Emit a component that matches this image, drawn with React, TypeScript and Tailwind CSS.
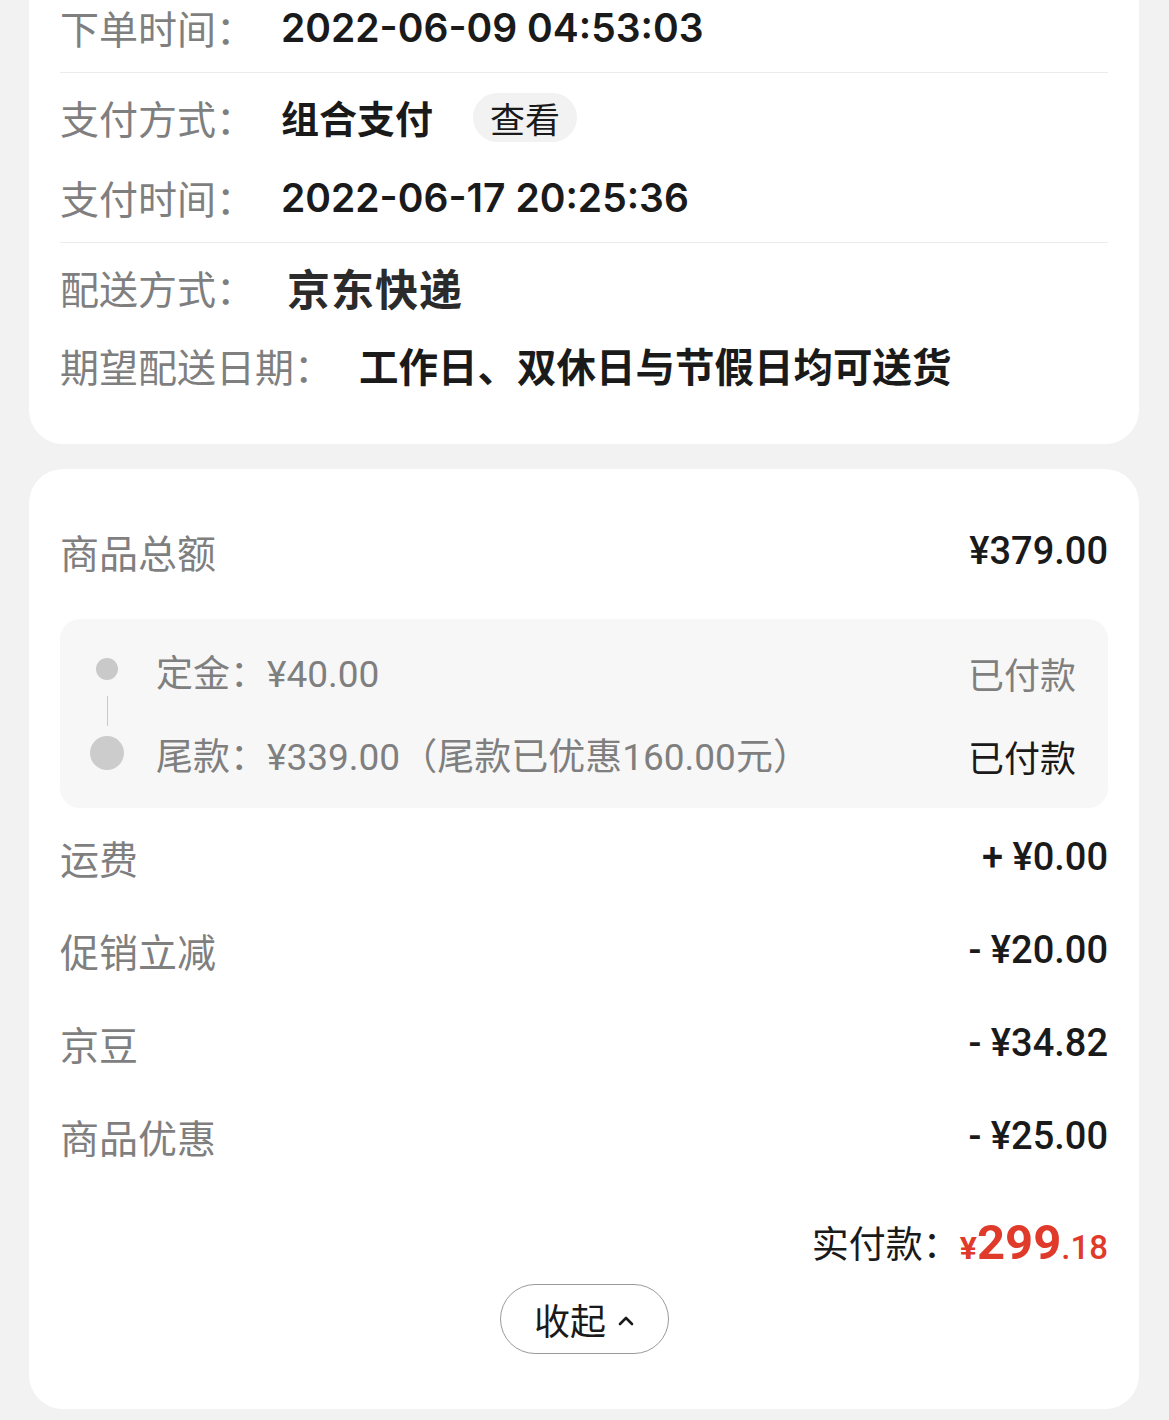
import React from "react";

const CJK = "font-['Noto_Sans_CJK_SC',sans-serif]";
const NUM_TOP = "font-['Inter','Noto_Sans_CJK_SC',sans-serif]";
const NUM = "font-['Roboto','Noto_Sans_CJK_SC',sans-serif]";

const InfoRow = ({
  label,
  labelWidth = "w-[221px]",
  children,
}: {
  label: string;
  labelWidth?: string;
  children: React.ReactNode;
}) => (
  <div className="flex h-[54px] items-center">
    <span className={`${labelWidth} shrink-0 text-[39px] leading-none text-[#7f7f7f] ${CJK}`}>{label}</span>
    {children}
  </div>
);

const FeeRow = ({ label, value }: { label: string; value: string }) => (
  <div className="flex h-[54px] items-center justify-between">
    <span className={`text-[39px] leading-none text-[#7f7f7f] ${CJK}`}>{label}</span>
    <span className={`text-[38px] leading-none font-medium text-[#1a1a1a] ${NUM}`}>{value}</span>
  </div>
);

const App: React.FC = () => {
  return (
    <div className="min-h-[1420px] w-[1169px] bg-[#f2f2f2] pl-[29px] pr-[30px]">
      {/* Order info card (top edge is scrolled off) */}
      <div className="rounded-b-[34px] bg-white px-[31px] pb-[52px]">
        <InfoRow label="下单时间：">
          <span className={`text-[39px] leading-none font-semibold text-[#1a1a1a] ${NUM_TOP}`}>2022-06-09 04:53:03</span>
        </InfoRow>
        <div className="mt-[18px] mb-[17px] h-px bg-[#ececec]" />
        <InfoRow label="支付方式：">
          <span className={`text-[38px] leading-none font-bold text-[#1a1a1a] ${CJK}`}>组合支付</span>
          <span className={`ml-[40px] flex h-[49px] w-[104px] items-center justify-center rounded-full bg-[#f2f2f2] text-[35px] leading-none text-[#1a1a1a] ${CJK}`}>
            查看
          </span>
        </InfoRow>
        <div className="mt-[26px]">
          <InfoRow label="支付时间：">
            <span className={`text-[39px] leading-none font-semibold text-[#1a1a1a] ${NUM_TOP}`}>2022-06-17 20:25:36</span>
          </InfoRow>
        </div>
        <div className="mt-[18px] mb-[17px] h-px bg-[#ececec]" />
        <InfoRow label="配送方式：">
          <span className={`ml-[6px] text-[43px] leading-none font-bold tracking-[1px] text-[#2b2b2b] ${CJK}`}>京东快递</span>
        </InfoRow>
        <div className="mt-[24px]">
          <InfoRow label="期望配送日期：" labelWidth="w-[299px]">
            <span className={`text-[39.5px] leading-none font-bold text-[#1a1a1a] ${CJK}`}>工作日、双休日与节假日均可送货</span>
          </InfoRow>
        </div>
      </div>

      {/* Amount card */}
      <div className="mt-[25px] rounded-[34px] bg-white px-[31px] pt-[55px] pb-[55px]">
        <FeeRow label="商品总额" value="¥379.00" />

        <div className="mt-[41px] rounded-[20px] bg-[#f7f7f7] pt-[27px] pb-[25px] pl-[30px] pr-[32px]">
          <div className="flex h-[54px] items-center">
            <div className="flex w-[34px] shrink-0 justify-center">
              <div className="-mt-[8px] h-[22px] w-[22px] rounded-full bg-[#c9c9c9]" />
            </div>
            <span className={`ml-[32px] flex-1 text-[37px] leading-none text-[#7f7f7f] ${CJK}`}>
              定金：<span className={NUM}>¥40.00</span>
            </span>
            <span className={`text-[36px] leading-none text-[#7f7f7f] ${CJK}`}>已付款</span>
          </div>
          <div className="flex h-[29px] w-[34px] justify-center">
            <div className="-mt-[4px] h-[30px] w-px bg-[#c9c9c9]" />
          </div>
          <div className="flex h-[54px] items-center">
            <div className="flex w-[34px] shrink-0 justify-center">
              <div className="-mt-[6px] h-[34px] w-[34px] rounded-full bg-[#cccccc]" />
            </div>
            <span className={`ml-[32px] flex-1 text-[37px] leading-none text-[#7f7f7f] ${CJK}`}>
              尾款：<span className={NUM}>¥339.00</span>（尾款已优惠<span className={NUM}>160.00</span>元）
            </span>
            <span className={`text-[36px] leading-none text-[#1a1a1a] ${CJK}`}>已付款</span>
          </div>
        </div>

        <div className="mt-[22px] flex flex-col gap-[39px]">
          <FeeRow label="运费" value="+ ¥0.00" />
          <FeeRow label="促销立减" value="- ¥20.00" />
          <FeeRow label="京豆" value="- ¥34.82" />
          <FeeRow label="商品优惠" value="- ¥25.00" />
        </div>

        <div className="mt-[52px] flex h-[54px] items-center justify-end">
          <span className={`text-[37px] leading-none text-[#1a1a1a] ${CJK}`}>实付款：</span>
          <span className={`flex items-baseline font-bold text-[#e03a2a] ${NUM}`}>
            <span className="text-[32px] leading-none">¥</span>
            <span className="text-[49px] leading-none">299</span>
            <span className="text-[33px] leading-none font-medium">.18</span>
          </span>
        </div>

        <div className="mt-[15px] flex justify-center">
          <button className="flex h-[70px] w-[169px] items-center justify-center gap-[12px] rounded-full border-[1.5px] border-[#9a9a9a] bg-white">
            <span className={`text-[36px] leading-none text-[#1a1a1a] ${CJK}`}>收起</span>
            <svg width="16" height="12" viewBox="0 0 16 12" className="mt-[2px]">
              <polyline points="2,10 8,4 14,10" fill="none" stroke="#1a1a1a" strokeWidth="2.6" strokeLinecap="round" strokeLinejoin="round" />
            </svg>
          </button>
        </div>
      </div>
    </div>
  );
};

export default App;
